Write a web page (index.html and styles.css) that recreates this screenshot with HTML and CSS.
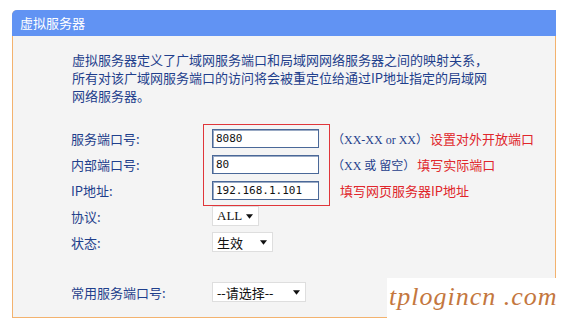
FILE: index.html
```html
<!DOCTYPE html>
<html lang="zh-CN">
<head>
	<meta charset="utf-8">
	<meta name="viewport" content="width=device-width">
	<title>虚拟服务器</title>
	<link rel="stylesheet" href="styles.css">
</head>
<body>

	<section class="panel">
		<h1 class="panel-head">虚拟服务器</h1>
		<div class="panel-body">
			<p class="intro">
				虚拟服务器定义了广域网服务端口和局域网网络服务器之间的映射关系，<br>
				所有对该广域网服务端口的访问将会被重定位给通过IP地址指定的局域网<br>
				网络服务器。
			</p>

			<form class="form">
				<div class="mark" aria-hidden="true"></div>

				<div class="row">
					<label class="label">服务端口号:</label>
					<input class="field" type="text" value="8080">
					<span class="hint">（XX-XX or XX）<em class="note">设置对外开放端口</em></span>
				</div>
				<div class="row">
					<label class="label">内部端口号:</label>
					<input class="field" type="text" value="80">
					<span class="hint">（XX 或 留空）<em class="note">填写实际端口</em></span>
				</div>
				<div class="row">
					<label class="label">IP地址:</label>
					<input class="field" type="text" value="192.168.1.101">
					<span class="hint"><em class="note note-ip">填写网页服务器IP地址</em></span>
				</div>
				<div class="row">
					<label class="label">协议:</label>
					<span class="select select-proto">
						ALL
						<svg viewBox="0 0 6 4"><polygon points="0,0 6,0 3,4"/></svg>
					</span>
				</div>
				<div class="row">
					<label class="label">状态:</label>
					<span class="select select-state">
						生效
						<svg viewBox="0 0 6 4"><polygon points="0,0 6,0 3,4"/></svg>
					</span>
				</div>
				<div class="row row-common">
					<label class="label">常用服务端口号:</label>
					<span class="select select-common">
						--请选择--
						<svg viewBox="0 0 6 4"><polygon points="0,0 6,0 3,4"/></svg>
					</span>
				</div>
			</form>
		</div>
	</section>

	<div class="watermark">tplogincn .com</div>

</body>
</html>
```

FILE: styles.css
```css
* {
	box-sizing: border-box;
	padding: 0;
	margin: 0;
}

body {
	position: relative;
	width: 562px;
	height: 319px;
	overflow: hidden;
	background-color: #FFF;
	font-family: "Noto Sans CJK SC", sans-serif;
	font-size: 13px;
	color: #1F3F8C;
}

.panel {
	width: 544px;
	margin: 10px 0 0 12px;
	border: 1px solid #F3B26E;
	border-top: 0;
	border-radius: 5px 0 0 0;
	background-color: #F4F4F4;
}

.panel-head {
	height: 26px;
	margin: 0 -1px;
	padding-left: 8px;
	border-radius: 5px 0 0 0;
	background-color: #6193F3;
	color: #FFF;
	font-size: 13px;
	font-weight: normal;
	line-height: 26px;
}

.panel-body {
	padding: 15px 0 12px 58px;
}

.intro {
	padding-left: 1px;
	line-height: 18px;
}

.form {
	position: relative;
	margin-top: 20px;
}

.row {
	display: flex;
	align-items: center;
	height: 26px;
}
.row-common {
	margin-top: 24px;
}

.label {
	width: 141px;
	flex: none;
}

.field {
	width: 107px;
	height: 19px;
	padding: 0 3px;
	border: 1px solid #4A6898;
	box-shadow: inset 1px 1px 0 #9AAAC4;
	background-color: #FFF;
	font-family: "DejaVu Sans Mono", monospace;
	font-size: 11px;
	color: #111;
}

.hint {
	margin-left: 13px;
	font-family: "Liberation Serif", "Noto Sans CJK SC", serif;
	font-size: 12px;
	white-space: nowrap;
}

.note {
	margin-left: 2px;
	font-family: "Noto Sans CJK SC", sans-serif;
	font-size: 13px;
	font-style: normal;
	color: #E0262B;
}
.note-ip {
	margin-left: 8px;
}

.mark {
	position: absolute;
	left: 132px;
	top: -1px;
	width: 127px;
	height: 82px;
	border: 1px solid #E0363A;
}

.select {
	display: flex;
	align-items: center;
	justify-content: space-between;
	height: 20px;
	padding: 0 5px 0 4px;
	border: 1px solid #DEDEDE;
	background-color: #FFF;
	font-family: "Liberation Serif", "Noto Sans CJK SC", serif;
	font-size: 13px;
	color: #111;
}
.select > svg {
	width: 7px;
	height: 5px;
	fill: #111;
}
.select-proto {
	width: 47px;
}
.select-state {
	width: 61px;
}
.select-common {
	width: 94px;
}

.watermark {
	position: absolute;
	left: 387px;
	top: 278px;
	width: 175px;
	height: 41px;
	padding-left: 2px;
	background-color: #FFF;
	font-family: "Liberation Serif", serif;
	font-style: italic;
	font-size: 26px;
	line-height: 38px;
	color: #C4773E;
	letter-spacing: 1px;
}
```
